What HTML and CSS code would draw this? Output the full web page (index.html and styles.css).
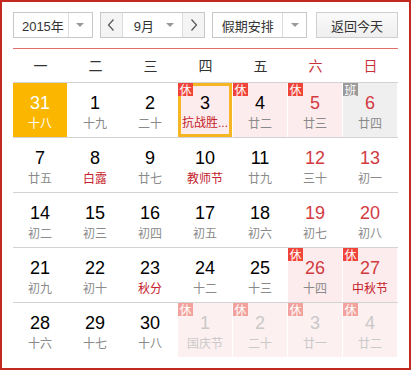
FILE: index.html
```html
<!DOCTYPE html>
<html lang="zh-CN">
<head>
<meta charset="utf-8">
<title>万年历</title>
<link rel="stylesheet" href="styles.css">
</head>
<body>
<div class="cal">
  <div class="toolbar">
    <div class="select year">
      <span class="sel-text">2015年</span>
      <span class="sel-arrow"><i class="tri"></i></span>
    </div>
    <div class="month-group">
      <span class="nav-btn"><svg width="8" height="12" viewBox="0 0 8 12"><polyline points="6.5,0.5 1.5,6 6.5,11.5" fill="none" stroke="#555" stroke-width="1.2"/></svg></span>
      <span class="month-sel"><span class="m-text">9月</span><i class="tri"></i></span>
      <span class="nav-btn next"><svg width="8" height="12" viewBox="0 0 8 12"><polyline points="1.5,0.5 6.5,6 1.5,11.5" fill="none" stroke="#555" stroke-width="1.2"/></svg></span>
    </div>
    <div class="select holiday">
      <span class="sel-text">假期安排</span>
      <span class="sel-arrow"><i class="tri"></i></span>
    </div>
    <div class="today-btn">返回今天</div>
  </div>

  <div class="week">
    <span>一</span><span>二</span><span>三</span><span>四</span><span>五</span><span class="we">六</span><span class="we">日</span>
  </div>

  <div class="rows">
    <div class="row">
      <div class="cell selected"><b>31</b><em>十八</em></div>
      <div class="cell"><b>1</b><em>十九</em></div>
      <div class="cell"><b>2</b><em>二十</em></div>
      <div class="cell rest today"><span class="badge">休</span><b>3</b><em class="fest short">抗战胜...</em></div>
      <div class="cell rest"><span class="badge">休</span><b>4</b><em>廿二</em></div>
      <div class="cell rest red"><span class="badge">休</span><b>5</b><em>廿三</em></div>
      <div class="cell work red"><span class="badge ban">班</span><b>6</b><em>廿四</em></div>
    </div>
    <div class="row">
      <div class="cell"><b>7</b><em>廿五</em></div>
      <div class="cell"><b>8</b><em class="fest">白露</em></div>
      <div class="cell"><b>9</b><em>廿七</em></div>
      <div class="cell"><b>10</b><em class="fest">教师节</em></div>
      <div class="cell"><b>11</b><em>廿九</em></div>
      <div class="cell red"><b>12</b><em>三十</em></div>
      <div class="cell red"><b>13</b><em>初一</em></div>
    </div>
    <div class="row">
      <div class="cell"><b>14</b><em>初二</em></div>
      <div class="cell"><b>15</b><em>初三</em></div>
      <div class="cell"><b>16</b><em>初四</em></div>
      <div class="cell"><b>17</b><em>初五</em></div>
      <div class="cell"><b>18</b><em>初六</em></div>
      <div class="cell red"><b>19</b><em>初七</em></div>
      <div class="cell red"><b>20</b><em>初八</em></div>
    </div>
    <div class="row">
      <div class="cell"><b>21</b><em>初九</em></div>
      <div class="cell"><b>22</b><em>初十</em></div>
      <div class="cell"><b>23</b><em class="fest">秋分</em></div>
      <div class="cell"><b>24</b><em>十二</em></div>
      <div class="cell"><b>25</b><em>十三</em></div>
      <div class="cell rest red"><span class="badge">休</span><b>26</b><em>十四</em></div>
      <div class="cell rest red"><span class="badge">休</span><b>27</b><em class="fest">中秋节</em></div>
    </div>
    <div class="row last">
      <div class="cell"><b>28</b><em>十六</em></div>
      <div class="cell"><b>29</b><em>十七</em></div>
      <div class="cell"><b>30</b><em>十八</em></div>
      <div class="cell rest other"><span class="badge">休</span><b>1</b><em>国庆节</em></div>
      <div class="cell rest other"><span class="badge">休</span><b>2</b><em>二十</em></div>
      <div class="cell rest other"><span class="badge">休</span><b>3</b><em>廿一</em></div>
      <div class="cell rest other"><span class="badge">休</span><b>4</b><em>廿二</em></div>
    </div>
  </div>
</div>
</body>
</html>
```

FILE: styles.css
```css
* { box-sizing: border-box; }
html, body { margin: 0; padding: 0; background: #fff; }
body {
  font-family: "Liberation Sans", Arial, "Noto Sans CJK SC", sans-serif;
  color: #333;
}
.cal {
  width: 411px;
  height: 370px;
  border: 2px solid #c4291f;
  padding: 10px 11px 0 11px;
  background: #fff;
}

/* toolbar */
.toolbar {
  display: flex;
  height: 26px;
  margin-bottom: 10px;
  font-size: 13px;
}
.select {
  display: flex;
  border: 1px solid #c8c8c8;
  background: #fff;
  height: 26px;
}
.sel-text {
  display: flex;
  align-items: center;
  justify-content: center;
  color: #333;
}
.sel-arrow {
  width: 24px;
  border-left: 1px solid #dcdcdc;
  display: flex;
  align-items: center;
  justify-content: center;
}
.tri {
  display: block;
  width: 0;
  height: 0;
  border-left: 4px solid transparent;
  border-right: 4px solid transparent;
  border-top: 4px solid #999;
}
.year { width: 80px; }
.year .sel-text { flex: 1; padding-left: 4px; }
.month-group {
  display: flex;
  margin-left: 7px;
  width: 106px;
  height: 26px;
  border: 1px solid #c8c8c8;
}
.nav-btn {
  width: 22px;
  display: flex;
  align-items: center;
  justify-content: center;
  background: #f4f4f4;
  border-right: 1px solid #dcdcdc;
}
.nav-btn.next { border-right: 0; border-left: 1px solid #dcdcdc; }
.month-sel {
  flex: 1;
  display: flex;
  align-items: center;
  padding: 0 8px 0 11px;
  background: #fff;
}
.m-text { flex: 1; }
.holiday { width: 95px; margin-left: 7px; }
.holiday .sel-text { flex: 1; }
.today-btn {
  margin-left: 9px;
  width: 82px;
  height: 26px;
  border: 1px solid #cfcfcf;
  background: linear-gradient(#fafafa, #efefef);
  display: flex;
  align-items: center;
  justify-content: center;
  color: #333;
}

/* week header */
.week {
  display: grid;
  grid-template-columns: repeat(7, 55px);
  height: 34px;
  border-top: 1px solid #e2706a;
  font-family: "Noto Sans CJK SC", sans-serif;
  font-size: 14px;
  color: #333;
}
.week span {
  display: flex;
  align-items: center;
  justify-content: center;
  padding-bottom: 1px;
}
.week .we { color: #c8333a; }

/* grid */
.row {
  display: grid;
  grid-template-columns: repeat(7, 55px);
  height: 55px;
  border-top: 1px solid #d3d3d3;
}
.cell {
  position: relative;
  width: 54px;
  height: 54px;
  padding-top: 10px;
  text-align: center;
}
.cell b {
  display: block;
  font-weight: normal;
  font-size: 18px;
  line-height: 20px;
  color: #000;
  font-family: "Liberation Sans", Arial, sans-serif;
}
.cell em {
  display: block;
  font-style: normal;
  font-size: 12px;
  line-height: 20px;
  color: #8a8a8a;
  font-family: "Noto Sans CJK SC", sans-serif;
  white-space: nowrap;
}
.cell em.short {
  font-family: "Liberation Sans", "Noto Sans CJK SC", sans-serif;
}
.cell em.fest { color: #c4222b; }
.cell.red b { color: #d23a3f; }

.cell.rest { background: #fdeced; }
.cell.work { background: #efefef; }
.cell.selected { background: #fbb700; }
.cell.selected b, .cell.selected em { color: #fff; }
.cell.today {
  border: 3px solid #f6b623;
  padding-top: 7px;
}

.badge {
  position: absolute;
  top: 0;
  left: 0;
  width: 15px;
  height: 13px;
  background: #f0443a;
  color: #fff;
  font-family: "Noto Sans CJK SC", sans-serif;
  font-size: 12px;
  line-height: 13px;
  text-align: center;
}
.cell.today .badge { top: -3px; left: -3px; }
.badge.ban { background: #9a9a9a; }

.cell.other { background: #fdf0f0; }
.cell.other b, .cell.other em { color: #c9c9c9; }
.cell.other .badge { background: #f3a19c; }
```
